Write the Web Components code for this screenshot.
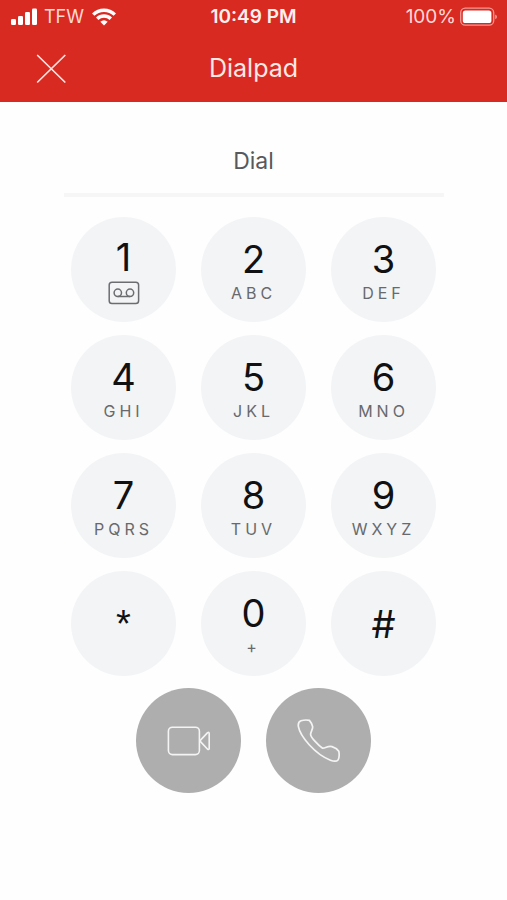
<!DOCTYPE html>
<html lang="en">
<head>
<meta charset="utf-8">
<meta name="viewport" content="width=device-width, initial-scale=1">
<title>Dialpad</title>
<style>
body {
    margin: 0;
    background: #fefefe;
    font-family: Inter, "Liberation Sans", sans-serif;
}
</style>
</head>
<body>
<dp-app></dp-app>

<script>
function define(name, html, setup) {
  const template = document.createElement("template");
  template.innerHTML = html;

  customElements.define(name, class extends HTMLElement {
    connectedCallback() {
      if (this.shadowRoot) return;
      this.attachShadow({ mode: "open" });
      this.shadowRoot.appendChild(template.content.cloneNode(true));
      if (setup) setup(this, this.shadowRoot);
    }
  });
}

define("dp-status-bar", /*html*/ `
<style>
:host {
    display: grid;
    grid-template-columns: 1fr auto 1fr;
    align-items: center;
    height: 34px;
    padding: 0 10px;
    font-size: 18px;
    line-height: 24px;
    color: #ffd9d5;
}

.side {
    display: flex;
    align-items: center;
    gap: 7px;
}

.side.right {
    justify-content: flex-end;
    gap: 4px;
    font-size: 19px;
}

time {
    font-size: 19px;
    font-weight: 600;
    color: #fff0ee;
}

svg {
    display: block;
}
</style>
<div class="side">
    <svg width="27" height="18" viewBox="0 0 27 18" fill="#fff" aria-hidden="true">
        <rect x="1" y="11" width="5" height="6" rx="1.3"/>
        <rect x="8" y="8" width="5" height="9" rx="1.3"/>
        <rect x="15" y="4" width="5" height="13" rx="1.3"/>
        <rect x="22" y="0.5" width="5" height="16.5" rx="1.3"/>
    </svg>
    <span>TFW</span>
    <svg width="26" height="18" viewBox="0 0 26 18" fill="none" stroke="#fff" stroke-width="3.4" aria-hidden="true">
        <path d="M2.2 6.6A15.4 15.4 0 0 1 23.8 6.6"/>
        <path d="M6.2 10.8A9.6 9.6 0 0 1 19.8 10.8"/>
        <path d="M13 17.4L9.3 13.7Q13 10.6 16.7 13.7Z" fill="#fff" stroke="none"/>
    </svg>
</div>
<time>10:49 PM</time>
<div class="side right">
    <span>100%</span>
    <svg width="37" height="20" viewBox="0 0 37 20" aria-hidden="true">
        <rect x="0.7" y="1.2" width="33" height="17" rx="4.5" fill="none" stroke="#f09a94" stroke-width="1.3"/>
        <rect x="2.8" y="3.4" width="28.6" height="12.6" rx="2.6" fill="#fff"/>
        <path d="M35.2 7.4Q37 8 37 9.8T35.2 12.2Z" fill="#f09a94"/>
    </svg>
</div>
`);

define("dp-header", /*html*/ `
<style>
:host {
    display: block;
    background: #d92a22;
}

.bar {
    display: grid;
    grid-template-columns: 1fr auto 1fr;
    align-items: center;
    height: 68px;
    padding: 0 32px;
}

button {
    justify-self: start;
    padding: 4px;
    border: none;
    background: none;
    cursor: pointer;
}

svg {
    display: block;
}

h1 {
    margin: 0;
    font-size: 25px;
    font-weight: 400;
    line-height: 32px;
    color: #ffe8e5;
}
</style>
<slot name="status"></slot>
<div class="bar">
    <button type="button" aria-label="Close">
        <svg width="30" height="30" viewBox="0 0 30 30" fill="none" stroke="#ffe3e0" stroke-width="1.7" stroke-linecap="round">
            <path d="M1.7 2.5L28.8 29M28.8 2.5L1.7 29"/>
        </svg>
    </button>
    <h1><slot></slot></h1>
</div>
`);

define("dp-key", /*html*/ `
<style>
:host {
    display: block;
}

button {
    display: flex;
    flex-direction: column;
    align-items: center;
    justify-content: center;
    gap: 4px;
    box-sizing: border-box;
    width: 105px;
    height: 105px;
    padding: 0;
    border: none;
    border-radius: 50%;
    background: #f2f4f6;
    font: inherit;
    cursor: pointer;
}

:host(:not([symbol])) button {
    padding-top: 3px;
}

:host([symbol="star"]) .digit {
    font-family: "Liberation Sans", sans-serif;
}

button:active {
    background: #e2e5e8;
}

.digit {
    font-size: 38px;
    line-height: 40px;
    color: #111113;
}

.letters {
    display: block;
    font-size: 16px;
    line-height: 20px;
    letter-spacing: 4px;
    color: #68696c;
}

.letters[hidden] {
    display: none;
}

::slotted(svg) {
    display: block;
}
</style>
<button type="button">
    <span class="digit"></span>
    <span class="letters"></span>
    <slot></slot>
</button>
`, (host, root) => {
  const letters = host.getAttribute("letters");
  root.querySelector(".digit").textContent = host.getAttribute("digit");
  root.querySelector(".letters").textContent = letters || "";
  root.querySelector(".letters").hidden = !letters;

  root.querySelector("button").addEventListener("click", () => {
    host.dispatchEvent(new CustomEvent("dial", {
      detail: host.getAttribute("digit"),
      bubbles: true,
      composed: true,
    }));
  });
});

define("dp-action", /*html*/ `
<style>
:host {
    display: block;
}

button {
    display: flex;
    align-items: center;
    justify-content: center;
    width: 105px;
    height: 105px;
    padding: 0;
    border: none;
    border-radius: 50%;
    background: #aeaeae;
    cursor: pointer;
}

::slotted(svg) {
    display: block;
}
</style>
<button type="button"><slot></slot></button>
`, (host, root) => {
  root.querySelector("button").setAttribute("aria-label", host.getAttribute("label"));
});

define("dp-number", /*html*/ `
<style>
:host {
    display: block;
    width: 100%;
    max-width: 380px;
}

input {
    display: block;
    box-sizing: border-box;
    width: 100%;
    height: 68px;
    padding: 0;
    border: none;
    border-bottom: 4px solid #f6f6f6;
    background: none;
    font: inherit;
    font-size: 23px;
    text-align: center;
    color: #58595b;
    outline: none;
}

input::placeholder {
    color: #58595b;
    opacity: 1;
}
</style>
<input type="tel" placeholder="Dial" aria-label="Number to dial">
`);

define("dp-app", /*html*/ `
<style>
:host {
    display: block;
}

main {
    display: flex;
    flex-direction: column;
    align-items: center;
    padding: 27px 24px;
}

.keys {
    display: grid;
    grid-template-columns: repeat(3, auto);
    gap: 13px 25px;
    margin-top: 20px;
}

.actions {
    display: flex;
    gap: 25px;
    margin-top: 12px;
}
</style>
<dp-header>
    <dp-status-bar slot="status"></dp-status-bar>
    Dialpad
</dp-header>
<main>
    <dp-number></dp-number>
    <div class="keys">
        <dp-key digit="1">
            <svg width="32" height="24" viewBox="0 0 32 24" fill="none" stroke="#6c6d70" stroke-width="1.5" aria-hidden="true">
                <rect x="1.2" y="1.2" width="29.4" height="21.4" rx="2.8"/>
                <circle cx="9.8" cy="11.8" r="3.7"/>
                <circle cx="22" cy="11.8" r="3.7"/>
                <path d="M9.8 15.5H22"/>
            </svg>
        </dp-key>
        <dp-key digit="2" letters="ABC"></dp-key>
        <dp-key digit="3" letters="DEF"></dp-key>
        <dp-key digit="4" letters="GHI"></dp-key>
        <dp-key digit="5" letters="JKL"></dp-key>
        <dp-key digit="6" letters="MNO"></dp-key>
        <dp-key digit="7" letters="PQRS"></dp-key>
        <dp-key digit="8" letters="TUV"></dp-key>
        <dp-key digit="9" letters="WXYZ"></dp-key>
        <dp-key digit="*" symbol="star"></dp-key>
        <dp-key digit="0" letters="+"></dp-key>
        <dp-key digit="#" symbol="hash"></dp-key>
    </div>
    <div class="actions">
        <dp-action label="Video call">
            <svg width="44" height="44" viewBox="0 0 44 44" fill="none" stroke="#f4f4f4" stroke-width="1.6" stroke-linejoin="round" aria-hidden="true">
                <rect x="1.4" y="8.2" width="31" height="27.4" rx="4"/>
                <path d="M32.8 21.9L40.6 13.6Q42.2 12.8 42.2 14.4V29.4Q42.2 31 40.6 30.2Z"/>
            </svg>
        </dp-action>
        <dp-action label="Call">
            <svg width="44" height="44" viewBox="0 0 44 44" fill="none" stroke="#f4f4f4" stroke-width="1.7" stroke-linejoin="round" aria-hidden="true">
                <path d="M4 1.8C6.8 0.9 10.4 0.9 12.4 1.4C13.8 3 15 5.4 15.6 7.4C16.2 9.8 13.6 12.6 13.6 15.4C13.6 18.2 21.6 26.6 25.6 29.2C29.2 29 31 26.4 35 27.6C38 28.6 40.6 30.4 41.8 32.2C42.4 35.4 42 39.4 41 41C39.4 42.8 36 42.2 33.4 41.2C26 38.4 18.6 32.8 12.2 25.8C6.6 19.4 2.4 13.2 1.4 7.6C1 5 1.8 2.6 4 1.8Z"/>
            </svg>
        </dp-action>
    </div>
</main>
`, (host, root) => {
  root.addEventListener("dial", e => {
    root.querySelector("dp-number").shadowRoot.querySelector("input").value += e.detail;
  });
});
</script>
</body>
</html>
